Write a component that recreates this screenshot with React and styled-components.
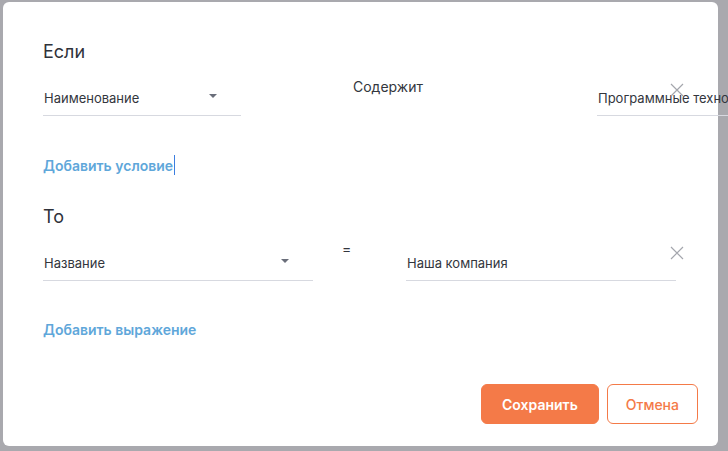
import React from "react";
import styled, { createGlobalStyle } from "styled-components";

const Global = createGlobalStyle`
  html, body { margin: 0; background: #a9a9ae; font-family: Inter, "Noto Sans", sans-serif; }
`;

const Overlay = styled.div`
  width: 728px;
  height: 451px;
  padding: 2px 10px 5px 3px;
  box-sizing: border-box;
`;

const Dialog = styled.div`
  background: #fff;
  border-radius: 6px;
  height: 100%;
  box-sizing: border-box;
  padding: 38px 20px 0 40px;
  display: flex;
  flex-direction: column;
  color: #33363d;
`;

const Heading = styled.div`
  font-size: 18px;
  color: #2f323a;
  height: 24px;
  line-height: 24px;
  margin-top: ${(p) => p.$top || 0}px;
`;

const Row = styled.div`
  display: flex;
  align-items: flex-start;
  margin-top: ${(p) => p.$top}px;
  position: relative;
`;

const Field = styled.div`
  width: ${(p) => p.$w}px;
  flex: none;
  margin-left: ${(p) => p.$ml || 0}px;
  height: ${(p) => p.$h}px;
  border-bottom: 1px solid #d7d9e0;
  display: flex;
  align-items: flex-end;
  padding: 0 0 9px 1px;
  box-sizing: border-box;
  font-size: 13px;
  position: relative;
  white-space: nowrap;
  overflow: hidden;
`;

const Caret = styled.span`
  position: absolute;
  right: ${(p) => p.$r}px;
  bottom: ${(p) => p.$b}px;
  border-left: 4px solid transparent;
  border-right: 4px solid transparent;
  border-top: 4px solid #6a6e7a;
`;

const Label = styled.div`
  font-size: 14px;
  width: ${(p) => p.$w}px;
  flex: none;
  padding-left: ${(p) => p.$ml}px;
  margin-top: ${(p) => p.$mt}px;
`;

const Close = styled.div`
  position: absolute;
  left: ${(p) => p.$l}px;
  top: ${(p) => p.$t}px;
  color: #a4a6ad;
  display: flex;
`;

const AddLink = styled.div`
  color: #5fa7da;
  font-size: 14px;
  font-weight: 600;
  margin-top: ${(p) => p.$top}px;
  display: flex;
  align-items: center;
`;

const Cursor = styled.span`
  width: 1px;
  height: 20px;
  background: #3c7ee0;
  margin-left: 1px;
`;

const Footer = styled.div`
  display: flex;
  justify-content: flex-end;
  gap: 8px;
  margin-top: auto;
  margin-bottom: 22px;
`;

const Button = styled.button`
  height: 40px;
  padding: 0 ${(p) => (p.$primary ? 20 : 18)}px;
  border-radius: 6px;
  font-family: inherit;
  font-size: 14px;
  font-weight: ${(p) => (p.$primary ? 600 : 500)};
  border: 1px solid #f47a48;
  background: ${(p) => (p.$primary ? "#f47a48" : "#fff")};
  color: ${(p) => (p.$primary ? "#fff" : "#f47a48")};
`;

const X = () => (
  <svg width="14" height="14" viewBox="0 0 14 14">
    <path d="M1 1L13 13M13 1L1 13" stroke="currentColor" strokeWidth="1.2" />
  </svg>
);

export default function App() {
  return (
    <>
      <Global />
      <Overlay>
        <Dialog>
          <Heading>Если</Heading>
          <Row $top={9}>
            <Field $w={198} $h={43}>
              Наименование
              <Caret $r={24} $b={17} />
            </Field>
            <Label $w={244} $ml={112} $mt={5}>Содержит</Label>
            <Field $w={198} $h={43}>
              Программные технолог
              <Caret $r={19} $b={13} />
            </Field>
            <Close $l={627} $t={10}><X /></Close>
          </Row>
          <AddLink $top={39}>Добавить условие<Cursor /></AddLink>
          <Heading $top={30}>То</Heading>
          <Row $top={9}>
            <Field $w={270} $h={43}>
              Название
              <Caret $r={24} $b={17} />
            </Field>
            <Label $w={64} $ml={29} $mt={2}>=</Label>
            <Field $w={270} $h={43}>Наша компания</Field>
            <Close $l={627} $t={8}><X /></Close>
          </Row>
          <AddLink $top={40}>Добавить выражение</AddLink>
          <Footer>
            <Button $primary>Сохранить</Button>
            <Button>Отмена</Button>
          </Footer>
        </Dialog>
      </Overlay>
    </>
  );
}
